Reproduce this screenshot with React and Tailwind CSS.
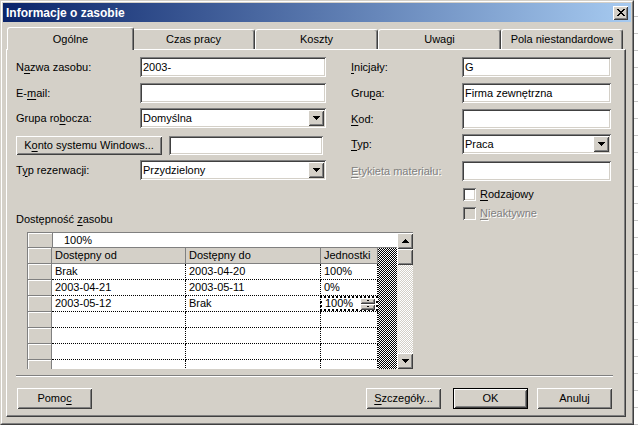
import React from "react";

const raised =
  "shadow-[inset_1px_1px_0_#ffffff,inset_-1px_-1px_0_#404040,inset_2px_2px_0_#d4d0c8,inset_-2px_-2px_0_#808080]";
const sunken =
  "shadow-[inset_1px_1px_0_#808080,inset_-1px_-1px_0_#ffffff,inset_2px_2px_0_#404040,inset_-2px_-2px_0_#d4d0c8]";
const disabledText = "text-[#808080] [text-shadow:1px_1px_0_#ffffff]";

function U({ children }) {
  return <span className="underline underline-offset-[2px]">{children}</span>;
}

function DownTri() {
  return (
    <svg width="7" height="4" viewBox="0 0 7 4" shapeRendering="crispEdges">
      <rect x="0" y="0" width="7" height="1" fill="#000" />
      <rect x="1" y="1" width="5" height="1" fill="#000" />
      <rect x="2" y="2" width="3" height="1" fill="#000" />
      <rect x="3" y="3" width="1" height="1" fill="#000" />
    </svg>
  );
}

function UpTri() {
  return (
    <svg width="7" height="4" viewBox="0 0 7 4" shapeRendering="crispEdges">
      <rect x="3" y="0" width="1" height="1" fill="#000" />
      <rect x="2" y="1" width="3" height="1" fill="#000" />
      <rect x="1" y="2" width="5" height="1" fill="#000" />
      <rect x="0" y="3" width="7" height="1" fill="#000" />
    </svg>
  );
}

function CloseGlyph() {
  const pat = [
    "XX....XX",
    ".XX..XX.",
    "..XXXX..",
    "...XX...",
    "..XXXX..",
    ".XX..XX.",
    "XX....XX",
  ];
  const rects = [];
  pat.forEach((row, y) =>
    row.split("").forEach((c, x) => {
      if (c === "X") rects.push(<rect key={`${x}-${y}`} x={x} y={y} width="1" height="1" fill="#000" />);
    })
  );
  return (
    <svg width="8" height="7" viewBox="0 0 8 7" shapeRendering="crispEdges">
      {rects}
    </svg>
  );
}

function Field({ className, children }) {
  return (
    <div className={`bg-white flex items-center pl-[3px] ${sunken} ${className}`}>{children}</div>
  );
}

function Combo({ className, children }) {
  return (
    <div className={`bg-white flex items-stretch p-[2px] ${sunken} ${className}`}>
      <div className="flex-1 flex items-center pl-[1px]">{children}</div>
      <div className={`w-[16px] bg-[#d4d0c8] flex items-center justify-center ${raised}`}>
        <DownTri />
      </div>
    </div>
  );
}

function Button({ className, children, isDefault }) {
  if (isDefault) {
    return (
      <div className={`border border-black ${className}`}>
        <div className={`w-full h-full bg-[#d4d0c8] flex items-center justify-center ${raised}`}>{children}</div>
      </div>
    );
  }
  return (
    <div className={`bg-[#d4d0c8] flex items-center justify-center ${raised} ${className}`}>{children}</div>
  );
}

function Tab({ label, selected, w }) {
  if (selected) {
    return (
      <div className="relative z-10 -ml-[2px] -mr-[2px] -mb-[1px] w-[127px] h-[23px] bg-[#d4d0c8] border-t border-l border-r border-t-white border-l-white border-r-[#404040] rounded-t-[3px] shadow-[inset_-1px_0_0_#808080] flex items-center justify-center">
        {label}
      </div>
    );
  }
  return (
    <div className={`${w} h-[20px] bg-[#d4d0c8] border-t border-l border-r border-t-white border-l-white border-r-[#404040] rounded-t-[3px] shadow-[inset_-1px_0_0_#808080] flex items-center justify-center`}>
      {label}
    </div>
  );
}

function LeftRow({ label, children, className }) {
  return (
    <div className={`flex items-center h-[20px] ${className}`}>
      <div className="w-[124px]">{label}</div>
      {children}
    </div>
  );
}

function RightRow({ label, children, className, disabled }) {
  return (
    <div className={`flex items-center h-[20px] ${className}`}>
      <div className={`w-[111px] ${disabled ? disabledText : ""}`}>{label}</div>
      {children}
    </div>
  );
}

const rowSel = "w-[24px] bg-[#d4d0c8] shadow-[inset_1px_1px_0_#ffffff] border-r border-b border-[#808080]";
const cell = "bg-white border-r border-b border-dotted border-black flex items-center pl-[3px] whitespace-nowrap";

function DataRow({ a, b, c, active }) {
  return (
    <div className="h-[16px] flex shrink-0">
      <div className={rowSel} />
      <div className={`w-[134px] ${cell}`}>{a}</div>
      <div className={`w-[135px] ${cell}`}>{b}</div>
      {active ? (
        <div className="w-[57px] border-b border-dotted border-black bg-white">
          <div className="h-full border-2 border-dotted border-black -ml-[1px] flex items-center pl-[3px] pr-[1px] text-black">
            <span className="flex-1 text-black">{c}</span>
            <div className="w-[15px] h-[12px] flex flex-col">
              <div className={`h-[6px] bg-[#d4d0c8] flex items-center justify-center ${raised}`}>
                <div className="w-[2px] h-[1px] bg-black" />
              </div>
              <div className={`h-[6px] bg-[#d4d0c8] flex items-center justify-center ${raised}`}>
                <div className="w-[2px] h-[1px] bg-black" />
              </div>
            </div>
          </div>
        </div>
      ) : (
        <div className={`w-[57px] ${cell}`}>{c}</div>
      )}
    </div>
  );
}

export default function App() {
  return (
    <div className="relative w-[638px] h-[429px] overflow-hidden bg-white bg-[image:repeating-linear-gradient(to_bottom,transparent_0px,transparent_16px,#c8c8c8_16px,#c8c8c8_17px)] font-['Liberation_Sans',Arial,sans-serif] text-[11px] leading-none text-black">
      <div className="absolute left-0 top-0 w-[634px] h-[425px] border border-t-[#d4d0c8] border-l-[#d4d0c8] border-b-[#404040] border-r-[#404040]">
        <div className="w-full h-full border border-t-white border-l-white border-b-[#808080] border-r-[#808080] bg-[#d4d0c8] p-[1px] flex flex-col">
          {/* Title bar */}
          <div className="h-[19px] shrink-0 flex items-center bg-[linear-gradient(to_right,#0a246a,#a6caf0)] pl-[3px] pr-[3px]">
            <span className="text-white font-bold text-[12px]">Informacje o zasobie</span>
            <div className={`ml-auto w-[15px] h-[14px] bg-[#d4d0c8] flex items-center justify-center ${raised}`}>
              <CloseGlyph />
            </div>
          </div>

          {/* Body */}
          <div className="flex-1 flex flex-col pt-[5px] pl-[3px] pr-[5px] pb-[5px]">
            {/* Tabs */}
            <div className="h-[22px] shrink-0 flex items-end pl-[3px]">
              <Tab label="Ogólne" selected />
              <Tab label="Czas pracy" w="w-[123px]" />
              <Tab label="Koszty" w="w-[123px]" />
              <Tab label="Uwagi" w="w-[123px]" />
              <Tab label="Pola niestandardowe" w="w-[122px]" />
            </div>

            {/* Panel */}
            <div className="flex-1 flex flex-col border border-t-white border-l-white border-b-[#404040] border-r-[#404040] shadow-[inset_-1px_-1px_0_#808080]">
              {/* Form */}
              <div className="flex items-start">
                <div className="ml-[9px] pt-[7px] w-[310px] flex flex-col">
                  <LeftRow label={<>N<U>a</U>zwa zasobu:</>}>
                    <Field className="w-[186px] h-full">2003-</Field>
                  </LeftRow>
                  <LeftRow className="mt-[6px]" label={<>E-<U>m</U>ail:</>}>
                    <Field className="w-[186px] h-full" />
                  </LeftRow>
                  <LeftRow className="mt-[5px]" label={<>Grupa ro<U>b</U>ocza:</>}>
                    <Combo className="w-[186px] h-full">Domyślna</Combo>
                  </LeftRow>
                  <div className="mt-[8px] h-[19px] flex items-stretch">
                    <Button className="w-[146px]">
                      <span>
                        K<U>o</U>nto systemu Windows...
                      </span>
                    </Button>
                    <Field className="ml-[7px] w-[154px]" />
                  </div>
                  <LeftRow className="mt-[5px]" label={<>T<U>y</U>p rezerwacji:</>}>
                    <Combo className="w-[186px] h-full">Przydzielony</Combo>
                  </LeftRow>
                </div>

                <div className="ml-[25px] pt-[7px] flex flex-col">
                  <RightRow label={<><U>I</U>nicjały:</>}>
                    <Field className="w-[149px] h-full">G</Field>
                  </RightRow>
                  <RightRow className="mt-[6px]" label={<>Gru<U>p</U>a:</>}>
                    <Field className="w-[149px] h-full">Firma zewnętrzna</Field>
                  </RightRow>
                  <RightRow className="mt-[6px]" label={<><U>K</U>od:</>}>
                    <Field className="w-[149px] h-full" />
                  </RightRow>
                  <RightRow className="mt-[5px]" label={<><U>T</U>yp:</>}>
                    <Combo className="w-[149px] h-full">Praca</Combo>
                  </RightRow>
                  <RightRow className="mt-[7px]" disabled label={<><U>E</U>tykieta materiału:</>}>
                    <Field className="w-[149px] h-full" />
                  </RightRow>
                  <div className="mt-[7px] h-[13px] flex items-center pl-[112px]">
                    <div className={`w-[13px] h-[13px] bg-white ${sunken}`} />
                    <span className="ml-[4px]">
                      <U>R</U>odzajowy
                    </span>
                  </div>
                  <div className="mt-[6px] h-[13px] flex items-center pl-[112px]">
                    <div className={`w-[13px] h-[13px] bg-[#d4d0c8] ${sunken}`} />
                    <span className={`ml-[4px] ${disabledText}`}>
                      <U>N</U>ieaktywne
                    </span>
                  </div>
                </div>
              </div>

              {/* Availability label */}
              <div className="ml-[9px] -mt-[7px] h-[13px] flex items-center">
                <span>
                  Dostępność <U>z</U>asobu
                </span>
              </div>

              {/* Grid */}
              <div className="ml-[20px] mt-[6px] w-[386px] h-[137px] shrink-0 border-l border-t border-[#808080] flex">
                <div className="w-[369px] flex flex-col">
                  <div className="h-[15px] shrink-0 flex border-b border-[#808080]">
                    <div className="w-[25px] bg-[#d4d0c8] shadow-[inset_1px_1px_0_#ffffff] border-r border-[#808080]" />
                    <div className="flex-1 bg-white pl-[11px] flex items-center">100%</div>
                  </div>
                  <div className="flex-1 flex min-h-0">
                    <div className="w-[350px] flex flex-col overflow-hidden">
                      <div className="h-[16px] shrink-0 flex">
                        <div className={rowSel} />
                        <div className="w-[134px] bg-[#d4d0c8] border-r border-b border-[#808080] flex items-center pl-[3px]">Dostępny od</div>
                        <div className="w-[135px] bg-[#d4d0c8] border-r border-b border-[#808080] flex items-center pl-[3px]">Dostępny do</div>
                        <div className="w-[57px] bg-[#d4d0c8] border-r border-b border-[#808080] flex items-center pl-[3px]">Jednostki</div>
                      </div>
                      <DataRow a="Brak" b="2003-04-20" c="100%" />
                      <DataRow a="2003-04-21" b="2003-05-11" c="0%" />
                      <DataRow a="2003-05-12" b="Brak" c="100%" active />
                      <DataRow a="" b="" c="" />
                      <DataRow a="" b="" c="" />
                      <DataRow a="" b="" c="" />
                      <DataRow a="" b="" c="" />
                    </div>
                    <div className="flex-1 bg-[image:repeating-conic-gradient(#000000_0%_25%,#ffffff_0%_50%)] bg-[length:2px_2px]" />
                  </div>
                </div>
                <div className="w-[16px] flex flex-col">
                  <div className={`h-[16px] shrink-0 bg-[#d4d0c8] flex items-center justify-center ${raised}`}>
                    <UpTri />
                  </div>
                  <div className={`h-[16px] shrink-0 bg-[#d4d0c8] ${raised}`} />
                  <div className="flex-1 bg-[image:repeating-conic-gradient(#d4d0c8_0%_25%,#ffffff_0%_50%)] bg-[length:2px_2px]" />
                  <div className={`h-[16px] shrink-0 bg-[#d4d0c8] flex items-center justify-center ${raised}`}>
                    <DownTri />
                  </div>
                </div>
              </div>

              {/* Separator */}
              <div className="ml-[9px] mt-[6px] w-[597px] h-[2px] shrink-0 border-t border-b border-t-[#808080] border-b-white" />

              {/* Buttons */}
              <div className="mt-[11px] h-[21px] shrink-0 flex pl-[10px] pr-[13px]">
                <Button className="w-[75px]">
                  <span>
                    Pomo<U>c</U>
                  </span>
                </Button>
                <div className="flex-1" />
                <Button className="w-[75px]">
                  <span>
                    <U>S</U>zczegóły...
                  </span>
                </Button>
                <Button className="ml-[12px] w-[75px]" isDefault>
                  OK
                </Button>
                <Button className="ml-[9px] w-[75px]">Anuluj</Button>
              </div>
            </div>
          </div>
        </div>
      </div>
    </div>
  );
}
